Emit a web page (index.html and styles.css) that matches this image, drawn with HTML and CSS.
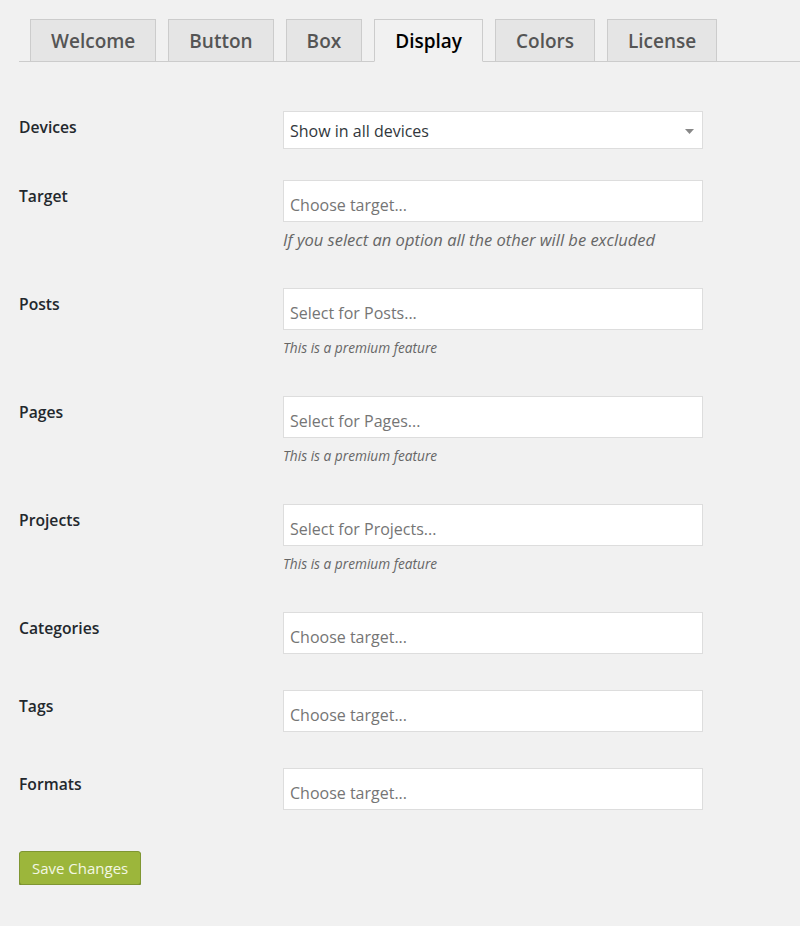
FILE: index.html
```html
<!DOCTYPE html>
<html lang="en">
<head>
<meta charset="utf-8">
<title>Display settings</title>
<link rel="stylesheet" href="styles.css">
</head>
<body>
<div class="wrap">
  <nav class="tabs">
    <a class="tab">Welcome</a>
    <a class="tab">Button</a>
    <a class="tab">Box</a>
    <a class="tab active">Display</a>
    <a class="tab">Colors</a>
    <a class="tab">License</a>
  </nav>

  <form class="form">
    <div class="row row-select">
      <div class="label">Devices</div>
      <div class="field">
        <div class="select">
          <span>Show in all devices</span>
          <svg class="arrow" width="9" height="5" viewBox="0 0 9 5"><path d="M0 0H9L4.5 5Z" fill="#888"/></svg>
        </div>
      </div>
    </div>

    <div class="row">
      <div class="label">Target</div>
      <div class="field">
        <div class="input">Choose target...</div>
        <p class="hint">If you select an option all the other will be excluded</p>
      </div>
    </div>

    <div class="row">
      <div class="label">Posts</div>
      <div class="field">
        <div class="input">Select for Posts...</div>
        <p class="hint small">This is a premium feature</p>
      </div>
    </div>

    <div class="row">
      <div class="label">Pages</div>
      <div class="field">
        <div class="input">Select for Pages...</div>
        <p class="hint small">This is a premium feature</p>
      </div>
    </div>

    <div class="row">
      <div class="label">Projects</div>
      <div class="field">
        <div class="input">Select for Projects...</div>
        <p class="hint small">This is a premium feature</p>
      </div>
    </div>

    <div class="row plain">
      <div class="label">Categories</div>
      <div class="field">
        <div class="input">Choose target...</div>
      </div>
    </div>

    <div class="row plain">
      <div class="label">Tags</div>
      <div class="field">
        <div class="input">Choose target...</div>
      </div>
    </div>

    <div class="row plain last">
      <div class="label">Formats</div>
      <div class="field">
        <div class="input">Choose target...</div>
      </div>
    </div>

    <div class="actions">
      <button type="button" class="btn-save">Save Changes</button>
    </div>
  </form>
</div>
</body>
</html>
```

FILE: styles.css
```css
html, body {
  margin: 0;
  padding: 0;
  background: #f1f1f1;
}

body {
  font-family: "Open Sans", "Noto Sans", "Liberation Sans", sans-serif;
  color: #23282d;
}

.wrap {
  padding: 19px 0 0 19px;
}

.tabs {
  display: flex;
  gap: 12px;
  padding-left: 11px;
  border-bottom: 1px solid #ccc;
  height: 43px;
  box-sizing: border-box;
}

.tab {
  display: block;
  box-sizing: border-box;
  height: 43px;
  padding: 0 20px;
  border: 1px solid #ccc;
  background: #e5e5e5;
  color: #555;
  font-size: 19px;
  font-weight: 600;
  line-height: 42px;
  cursor: pointer;
}

.tab.active {
  background: #f1f1f1;
  color: #000;
  border-bottom-color: #f1f1f1;
}

.form {
  padding-top: 49px;
}

.row {
  display: grid;
  grid-template-columns: 264px 420px;
  margin-bottom: 38px;
}

.row-select {
  margin-bottom: 31px;
}

.row.plain {
  margin-bottom: 36px;
}

.row.last {
  margin-bottom: 41px;
}

.label {
  font-size: 15.7px;
  font-weight: 600;
  line-height: 20px;
  padding-top: 6px;
  color: #23282d;
}

.select,
.input {
  box-sizing: border-box;
  width: 420px;
  background: #fff;
  border: 1px solid #ddd;
  font-size: 16px;
  padding-left: 6px;
}

.select {
  height: 38px;
  display: flex;
  align-items: center;
  justify-content: space-between;
  padding-right: 8px;
  color: #32373c;
  line-height: 20px;
  padding-top: 1px;
}

.arrow {
  display: block;
  margin-top: 2px;
}

.input {
  height: 42px;
  padding-top: 10px;
  line-height: 28px;
  color: #757575;
}

.hint {
  margin: 8px 0 0;
  line-height: 20px;
  font-size: 16.5px;
  font-style: italic;
  color: #666;
}

.hint.small {
  font-size: 13.7px;
}

.actions {
  display: flex;
}

.btn-save {
  box-sizing: border-box;
  height: 34px;
  padding: 0 12px;
  background: #9cb63b;
  border: 1px solid #7f9632;
  border-radius: 3px;
  box-shadow: 0 1px 0 #6f8428;
  color: #f3f7e4;
  font-family: inherit;
  font-size: 15px;
  line-height: 30px;
  cursor: pointer;
}
```
